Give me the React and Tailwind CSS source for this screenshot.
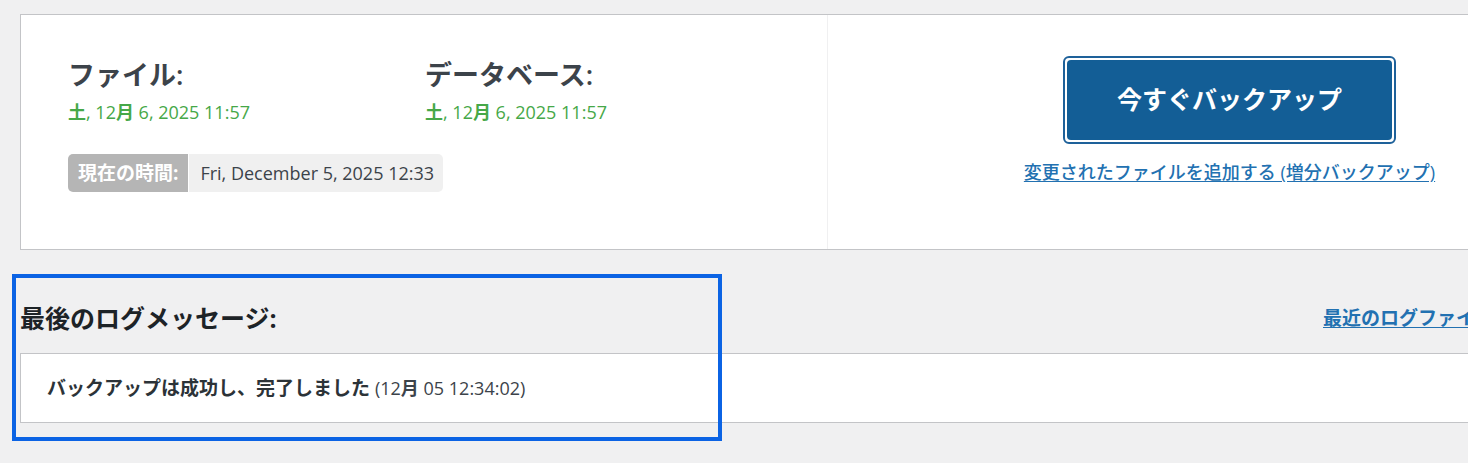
import React from "react";

const font = {
  fontFamily: '"Open Sans", "Noto Sans CJK JP", sans-serif',
};

function GreenDate() {
  return (
    <p className="mt-[9px] text-[18px] leading-[24px] text-[#46a848]">
      <span className="font-semibold">土</span>, 12<span className="font-semibold">月</span> 6, 2025 11:57
    </p>
  );
}

export default function App() {
  return (
    <div
      className="relative w-[1468px] h-[463px] overflow-hidden bg-[#f0f0f1] text-[#2c3338]"
      style={font}
    >
      <div className="pl-[20px] pt-[14px]">
        {/* Status card */}
        <div className="flex w-[1612px] h-[236px] border border-[#c3c4c7] bg-white">
          <div className="w-[806px] shrink-0 pl-[47px] pt-[44px]">
            <div className="grid grid-cols-[357px_1fr]">
              <div>
                <h3 className="text-[27px] leading-[32px] font-semibold text-[#3c434a]">ファイル:</h3>
                <GreenDate />
              </div>
              <div>
                <h3 className="text-[27px] leading-[32px] font-semibold text-[#3c434a]">データベース:</h3>
                <GreenDate />
              </div>
            </div>
            <div className="mt-[30px] inline-flex h-[38px] items-stretch overflow-hidden rounded-[5px]">
              <span className="flex items-center bg-[#b5b5b5] px-[10px] text-[19px] font-bold text-white">
                現在の時間:
              </span>
              <span className="flex items-center bg-[#f0f0f0] pl-[11px] pr-[9px] text-[18px] text-[#3c434a] border-l border-white">
                Fri, December 5, 2025 12:33
              </span>
            </div>
          </div>
          <div className="w-px shrink-0 bg-[#f0f0f1]" />
          <div className="flex flex-1 flex-col items-center pt-[41px]">
            <div className="rounded-[6px] border-2 border-[#1e619a] bg-white p-[2px]">
              <button className="flex h-[80px] w-[325px] items-center justify-center rounded-[4px] bg-[#135e96] text-[25px] font-bold text-white">
                今すぐバックアップ
              </button>
            </div>
            <a href="#" className="mt-[16px] text-[18px] leading-[24px] font-medium text-[#2271b1] underline underline-offset-2">
              変更されたファイルを追加する (増分バックアップ)
            </a>
          </div>
        </div>

        {/* Last log message */}
        <div className="mt-[52px] grid w-[1612px] grid-cols-[1303px_1fr] items-center">
          <h3 className="text-[25px] leading-[32px] font-bold text-[#1d2327]">最後のログメッセージ:</h3>
          <a href="#" className="whitespace-nowrap text-[19px] leading-[28px] font-semibold text-[#2271b1] underline underline-offset-2">
            最近のログファイル
          </a>
        </div>
        <div className="mt-[19px] flex h-[70px] w-[1612px] items-center border border-[#c3c4c7] bg-white pl-[26px]">
          <p className="text-[19px] text-[#2c3338]">
            <span className="font-semibold">バックアップは成功し、完了しました</span>{" "}
            <span className="text-[18px] text-[#3c434a]">
              (12<span className="font-semibold">月</span> 05 12:34:02)
            </span>
          </p>
        </div>
      </div>

      {/* Highlight annotation */}
      <div className="pointer-events-none absolute left-[12px] top-[274px] h-[167px] w-[710px] border-4 border-[#0b63e4]" />
    </div>
  );
}
